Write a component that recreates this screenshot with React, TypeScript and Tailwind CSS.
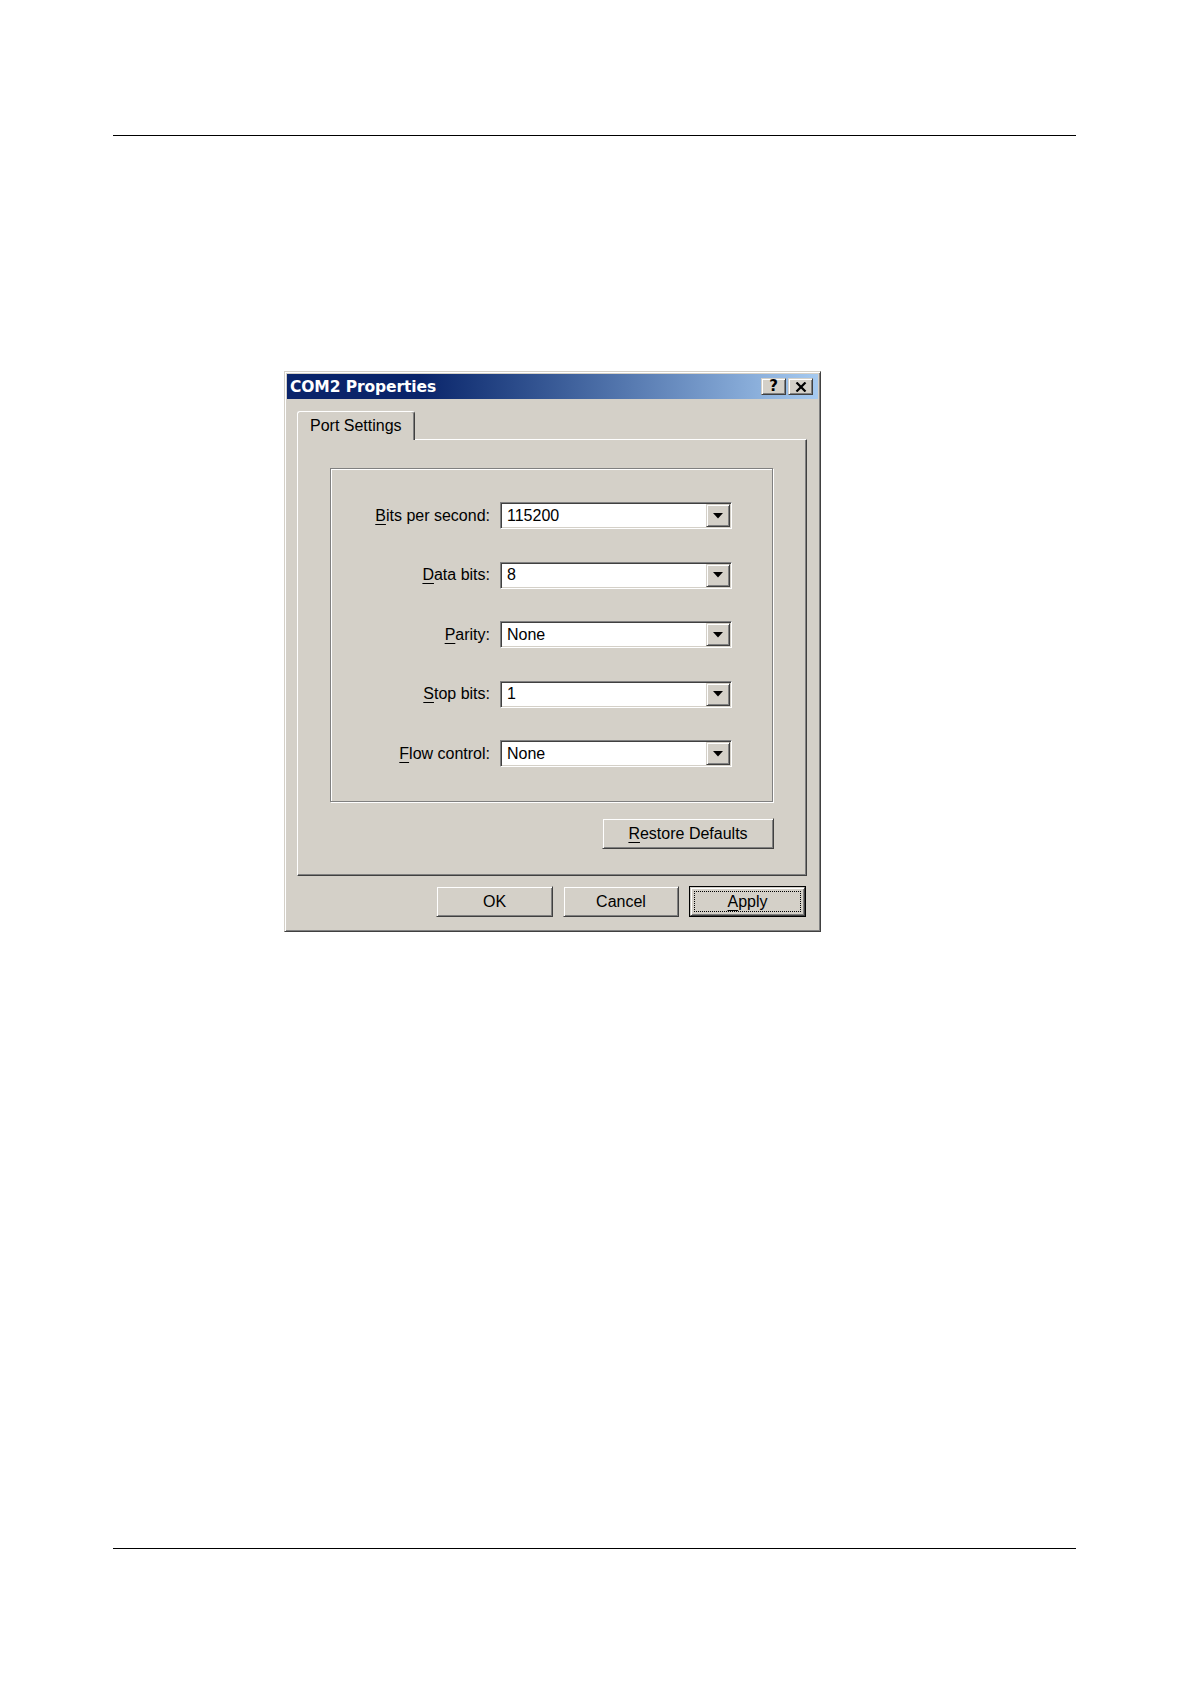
import type { ReactNode } from 'react'

const raised =
    'border border-t-[#d4d0c8] border-l-[#d4d0c8] border-r-[#404040] border-b-[#404040] shadow-[inset_1px_1px_0_#ffffff,inset_-1px_-1px_0_#808080] bg-[#d4d0c8]'

const rows = [
    { key: 'B', rest: 'its per second:', value: '115200' },
    { key: 'D', rest: 'ata bits:', value: '8' },
    { key: 'P', rest: 'arity:', value: 'None' },
    { key: 'S', rest: 'top bits:', value: '1' },
    { key: 'F', rest: 'low control:', value: 'None' },
]

function Mnemonic({ letter, rest }: { letter: string; rest: string }) {
    return (
        <>
            <span className="underline underline-offset-[3px] decoration-1">{letter}</span>
            {rest}
        </>
    )
}

function ComboBox({ value }: { value: string }) {
    return (
        <div className="flex h-[27px] w-[232px] items-stretch border border-t-[#808080] border-l-[#808080] border-r-white border-b-white bg-white p-[1px] shadow-[inset_1px_1px_0_#404040,inset_-1px_-1px_0_#d4d0c8]">
            <span className="flex flex-1 items-center pl-[5px] text-[16px] leading-none text-black">{value}</span>
            <div className={`${raised} flex w-[24px] items-center justify-center`}>
                <svg width="10" height="6" viewBox="0 0 10 6">
                    <path d="M0 0h10L5 5.5z" fill="#000" />
                </svg>
            </div>
        </div>
    )
}

function PushButton({ children, width, isDefault }: { children: ReactNode; width: string; isDefault?: boolean }) {
    if (isDefault) {
        return (
            <div className={`${width} h-[31px] border border-black`}>
                <div className={`${raised} flex h-full w-full items-center justify-center p-[3px]`}>
                    <div className="flex h-full w-full items-center justify-center border border-dotted border-black text-[16px] text-black">
                        {children}
                    </div>
                </div>
            </div>
        )
    }
    return (
        <div className={`${raised} ${width} flex h-[31px] items-center justify-center text-[16px] text-black`}>
            {children}
        </div>
    )
}

function TitleButton({ children }: { children: ReactNode }) {
    return <div className={`${raised} flex h-[17px] w-[25px] items-center justify-center`}>{children}</div>
}

export default function App() {
    return (
        <div className="flex h-[1684px] w-[1191px] flex-col bg-white font-['Liberation_Sans',Arial,sans-serif]">
            <div className="ml-[113px] mt-[135px] h-px w-[963px] bg-black" />

            <div className="ml-[284px] mt-[235px] w-[537px] border border-t-[#d4d0c8] border-l-[#d4d0c8] border-r-[#404040] border-b-[#404040] bg-[#d4d0c8] p-[2px] shadow-[inset_1px_1px_0_#ffffff,inset_-1px_-1px_0_#808080]">
                {/* caption */}
                <div className="flex h-[25px] items-center justify-between bg-linear-to-r from-[#0a246a] from-25% to-[#a6caf0] pl-[3px] pr-[5px]">
                    <span className="pt-[2px] font-['DejaVu_Sans',Verdana,sans-serif] text-[15.5px] font-bold tracking-[-0.1px] text-white">
                        COM2 Properties
                    </span>
                    <div className="flex gap-[2px]">
                        <TitleButton>
                            <span className="font-['DejaVu_Sans',sans-serif] text-[15px] font-bold leading-none text-black">?</span>
                        </TitleButton>
                        <TitleButton>
                            <svg width="12" height="10" viewBox="0 0 12 10">
                                <path d="M1.5 0.5l9 9M10.5 0.5l-9 9" stroke="#000" strokeWidth="2.2" />
                            </svg>
                        </TitleButton>
                    </div>
                </div>

                <div className="pb-[12px] pl-[10px] pr-[11px] pt-[12px]">
                    {/* tab */}
                    <div className="relative z-10 -mb-px flex h-[29px] w-[118px] items-center rounded-t-[3px] border border-b-0 border-t-white border-l-white border-r-[#404040] bg-[#d4d0c8] pl-[12px] shadow-[inset_-1px_0_0_#808080]">
                        <span className="text-[16px] text-black">Port Settings</span>
                    </div>

                    {/* tab panel */}
                    <div className="border border-t-white border-l-white border-r-[#404040] border-b-[#404040] pb-[26px] pl-[32px] pr-[32px] pt-[28px] shadow-[inset_-1px_-1px_0_#808080]">
                        <div className="flex w-[443px] flex-col gap-[32.5px] border border-[#808080] pb-[34px] pt-[33px] shadow-[inset_1px_1px_0_#ffffff,1px_1px_0_#ffffff]">
                            {rows.map((row) => (
                                <div key={row.key} className="flex h-[27px] items-center">
                                    <span className="w-[159px] text-right text-[16px] text-black">
                                        <Mnemonic letter={row.key} rest={row.rest} />
                                    </span>
                                    <div className="ml-[10px]">
                                        <ComboBox value={row.value} />
                                    </div>
                                </div>
                            ))}
                        </div>
                        <div className="mt-[16px] flex w-[444px] justify-end">
                            <PushButton width="w-[172px]">
                                <span className="h-[32px] leading-[32px]">
                                    <Mnemonic letter="R" rest="estore Defaults" />
                                </span>
                            </PushButton>
                        </div>
                    </div>

                    {/* dialog buttons */}
                    <div className="mt-[10px] flex justify-end gap-[10px] pr-px">
                        <PushButton width="w-[117px]">OK</PushButton>
                        <PushButton width="w-[116px]">Cancel</PushButton>
                        <PushButton width="w-[117px]" isDefault>
                            <Mnemonic letter="A" rest="pply" />
                        </PushButton>
                    </div>
                </div>
            </div>

            <div className="mb-[135px] ml-[113px] mt-auto h-px w-[963px] bg-black" />
        </div>
    )
}
